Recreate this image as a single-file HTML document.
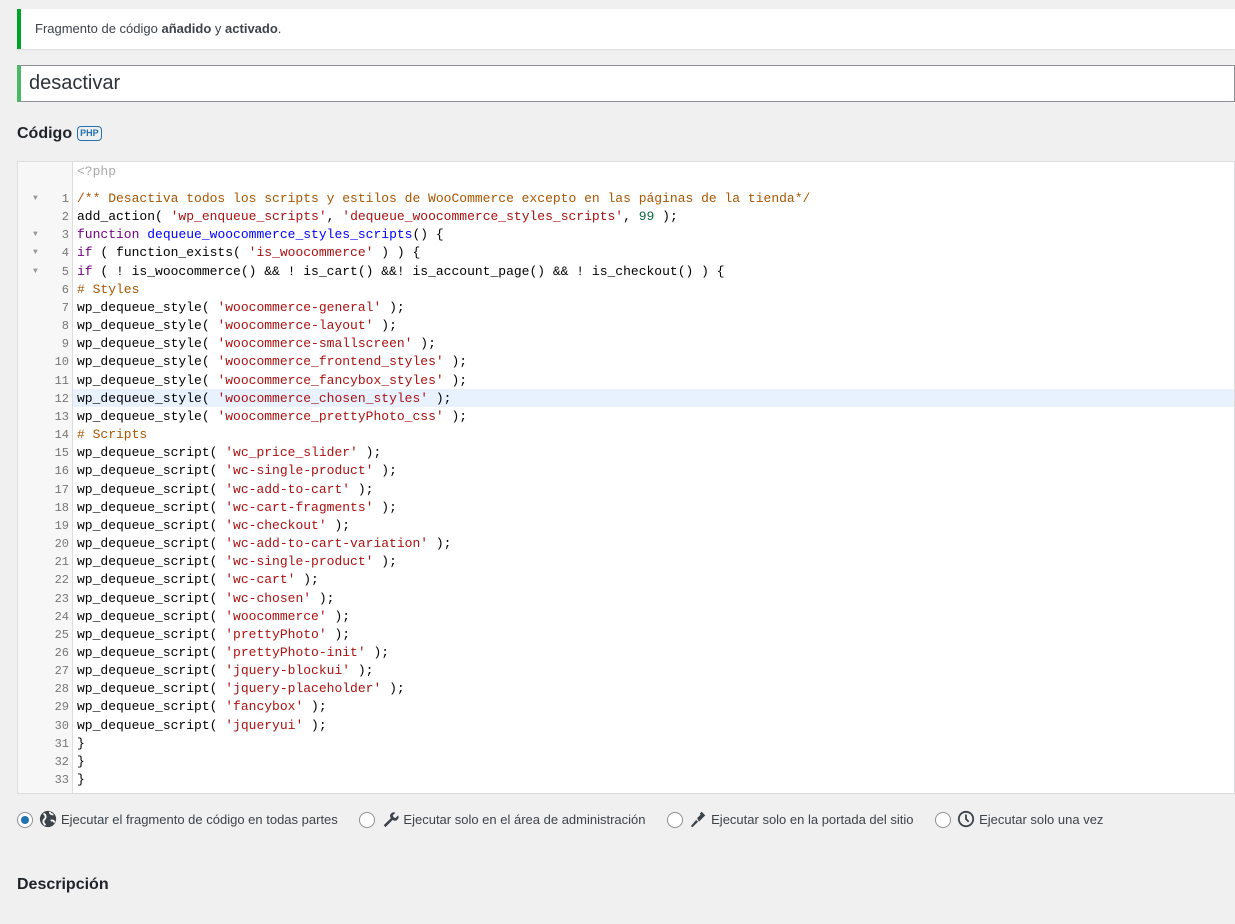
<!DOCTYPE html>
<html><head><meta charset="utf-8"><style>
body{margin:0;background:#f0f0f1;width:1235px;height:924px;overflow:hidden;font-family:"Liberation Sans",sans-serif;color:#1d2327}
.notice{position:absolute;left:17px;top:9px;width:1218px;height:40px;background:#fff;border-left:4px solid #00a32a;box-sizing:border-box;box-shadow:0 1px 1px rgba(0,0,0,.08);font-size:13px;line-height:40px;padding-left:14px;color:#3c434a}
.title{position:absolute;left:17px;top:65px;width:1218px;height:37px;background:#fff;border:1px solid #8c8f94;border-left:4px solid #4ab866;box-sizing:border-box;font-size:20px;line-height:35px;padding-left:8px;color:#2c3338}
h2{position:absolute;margin:0;font-size:16px;font-weight:600}
.php{display:inline-block;font-size:9px;font-weight:700;color:#2271b1;border:1px solid #2271b1;border-radius:4px;padding:1px 2px;vertical-align:2px;margin-left:5px;line-height:11px}
.ed{position:absolute;left:17px;top:161px;width:1218px;height:633px;background:#fff;border:1px solid #dcdcde;box-sizing:border-box}
.gut{position:absolute;left:0;top:0;width:54px;height:100%;background:#f7f7f7;border-right:1px solid #ddd}
.code{position:absolute;left:0;top:0;font-family:"Liberation Mono",monospace;font-size:13px}
.l{position:absolute;left:59px;height:18px;line-height:18px;white-space:pre;color:#000}
.n{position:absolute;width:51px;text-align:right;height:18px;line-height:18px;color:#777;font-family:"Liberation Mono",monospace;font-size:12px}
.f{position:absolute;left:15px;height:18px;line-height:18px;color:#999;font-size:8px}
.c{color:#a50}.s{color:#a11}.k{color:#708}.d{color:#00f}.m{color:#164}
.hl{position:absolute;left:55px;right:0;height:18px;background:#e8f2ff}
.radios{position:absolute;top:810px;left:17px;font-size:13px;color:#3c434a;white-space:nowrap}
.r{display:inline-block;width:14px;height:14px;border:1px solid #8c8f94;border-radius:50%;background:#fff;vertical-align:-4px;margin-right:6px;position:relative}
.r.on::after{content:"";position:absolute;left:3px;top:3px;width:8px;height:8px;border-radius:50%;background:#2271b1}
.it{display:inline-block;margin-right:18px}
svg{vertical-align:-4px;margin-right:4px}
</style></head><body>
<div class="notice">Fragmento de código <b>añadido</b> y <b>activado</b>.</div>
<div class="title">desactivar</div>
<h2 style="left:17px;top:125px">Código<span class="php">PHP</span></h2>
<div class="ed"><div class="gut"></div><div class="hl" style="top:227px"></div><div class="code" id="c"></div></div>
<div class="radios">
<span class="it"><span class="r on"></span><svg width="18" height="18" viewBox="0 0 20 20"><circle cx="10" cy="10" r="9" fill="#3c434a"/><path d="M5 4c2 1 3 3 2 5s-3 2-2 5l2 3M12 2c0 2 2 3 4 3M13 12c2-1 4 0 4 2" stroke="#fff" stroke-width="2" fill="none"/></svg>Ejecutar el fragmento de código en todas partes</span>
<span class="it"><span class="r"></span><svg width="18" height="18" viewBox="0 0 20 20"><path d="M3 17l8-8a4 4 0 0 1 5-6l-3 3 1 2 2 1 3-3a4 4 0 0 1-6 5l-8 8z" fill="#3c434a"/></svg>Ejecutar solo en el área de administración</span>
<span class="it"><span class="r"></span><svg width="18" height="18" viewBox="0 0 20 20"><path d="M2 18l6-7 2 2-6 6zM9 9l5-5 3 1-1 3-5 5z" fill="#3c434a"/><path d="M13 3l4 4" stroke="#3c434a" stroke-width="3"/></svg>Ejecutar solo en la portada del sitio</span>
<span class="it"><span class="r"></span><svg width="18" height="18" viewBox="0 0 20 20"><circle cx="10" cy="10" r="8" fill="none" stroke="#3c434a" stroke-width="2"/><path d="M10 5v5l3 3" stroke="#3c434a" stroke-width="2" fill="none"/></svg>Ejecutar solo una vez</span>
</div>
<h2 style="left:17px;top:876px">Descripción</h2>
<script>
var L=[
'<span class="c">/** Desactiva todos los scripts y estilos de WooCommerce excepto en las páginas de la tienda*/</span>',
'add_action( <span class="s">\'wp_enqueue_scripts\'</span>, <span class="s">\'dequeue_woocommerce_styles_scripts\'</span>, <span class="m">99</span> );',
'<span class="k">function</span> <span class="d">dequeue_woocommerce_styles_scripts</span>() {',
'<span class="k">if</span> ( function_exists( <span class="s">\'is_woocommerce\'</span> ) ) {',
'<span class="k">if</span> ( ! is_woocommerce() &amp;&amp; ! is_cart() &amp;&amp;! is_account_page() &amp;&amp; ! is_checkout() ) {',
'<span class="c"># Styles</span>'];
['woocommerce-general','woocommerce-layout','woocommerce-smallscreen','woocommerce_frontend_styles','woocommerce_fancybox_styles','woocommerce_chosen_styles','woocommerce_prettyPhoto_css'].forEach(function(s){L.push('wp_dequeue_style( <span class="s">\''+s+'\'</span> );')});
L.push('<span class="c"># Scripts</span>');
['wc_price_slider','wc-single-product','wc-add-to-cart','wc-cart-fragments','wc-checkout','wc-add-to-cart-variation','wc-single-product','wc-cart','wc-chosen','woocommerce','prettyPhoto','prettyPhoto-init','jquery-blockui','jquery-placeholder','fancybox','jqueryui'].forEach(function(s){L.push('wp_dequeue_script( <span class="s">\''+s+'\'</span> );')});
L.push('}','}','}');
var h='<div class="l" style="top:1px;color:#aaa">&lt;?php</div>';
L.forEach(function(t,i){var y=28+i*18.16;h+='<div class="n" style="top:'+y+'px">'+(i+1)+'</div><div class="l" style="top:'+y+'px">'+t+'</div>';if([0,2,3,4].indexOf(i)>=0)h+='<div class="f" style="top:'+y+'px">▼</div>';});
document.getElementById('c').innerHTML=h;
</script>
</body></html>
